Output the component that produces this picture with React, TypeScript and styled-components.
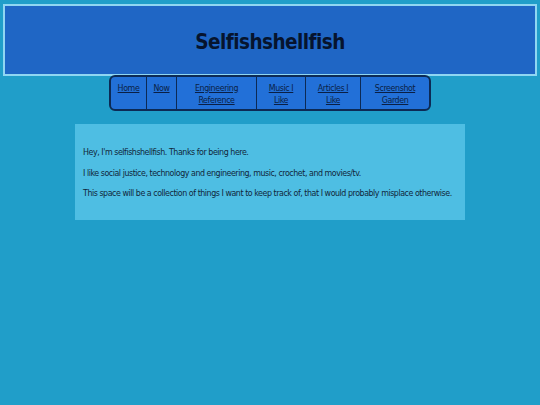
import React from 'react'
import styled, { createGlobalStyle } from 'styled-components'

const GlobalStyle = createGlobalStyle`
  html, body {
    margin: 0;
    padding: 0;
    background: #209ec9;
  }
  body {
    font-family: "DejaVu Sans Condensed", "DejaVu Sans", sans-serif;
    color: #0b2340;
  }
`

const Page = styled.div`
  display: flex;
  flex-direction: column;
  align-items: center;
  padding: 4px 3px 0 3px;
  min-height: 401px;
`

const Header = styled.header`
  box-sizing: border-box;
  width: 100%;
  height: 72px;
  background: #1f66c5;
  border: 2px solid #8fd6f2;
  display: flex;
  align-items: center;
  justify-content: center;
`

const Title = styled.h1`
  margin: 0;
  padding-top: 3px;
  font-size: 20.5px;
  font-weight: bold;
  letter-spacing: -0.55px;
  color: #06142e;
`

const Nav = styled.nav`
  display: grid;
  grid-template-columns: 35px 30px 80px 49px 55px 69px;
  margin-top: -1px;
  background: #2270d8;
  border: 2px solid #0c2a55;
  border-radius: 6px;
  overflow: hidden;
`

const NavCell = styled.div`
  display: flex;
  justify-content: center;
  align-items: flex-start;
  padding: 5px 2px 0;
  height: 27px;
  border-left: 1px solid #0c2a55;
  text-align: center;
  &:first-child {
    border-left: none;
  }
`

const NavLink = styled.a`
  font-size: 8.8px;
  line-height: 12px;
  letter-spacing: -0.4px;
  color: #0a1f45;
  text-decoration: underline;
`

const Content = styled.main`
  box-sizing: border-box;
  width: 390px;
  margin-top: 13px;
  background: #4ebee3;
  padding: 22px 8px 21px;
`

const Para = styled.p`
  margin: 0 0 8.5px;
  font-size: 8.8px;
  line-height: 12px;
  letter-spacing: -0.45px;
  color: #10263a;
  &:last-child {
    margin-bottom: 0;
  }
`

const links = [
  ['Home'],
  ['Now'],
  ['Engineering', 'Reference'],
  ['Music I', 'Like'],
  ['Articles I', 'Like'],
  ['Screenshot', 'Garden'],
]

export default function App() {
  return (
    <>
      <GlobalStyle />
      <Page>
        <Header>
          <Title>Selfishshellfish</Title>
        </Header>
        <Nav>
          {links.map((l) => (
            <NavCell key={l.join(' ')}>
              <NavLink href="#">
                {l[0]}
                {l[1] && (
                  <>
                    <br />
                    {l[1]}
                  </>
                )}
              </NavLink>
            </NavCell>
          ))}
        </Nav>
        <Content>
          <Para>Hey, I'm selfishshellfish. Thanks for being here.</Para>
          <Para>I like social justice, technology and engineering, music, crochet, and movies/tv.</Para>
          <Para>This space will be a collection of things I want to keep track of, that I would probably misplace otherwise.</Para>
        </Content>
      </Page>
    </>
  )
}
